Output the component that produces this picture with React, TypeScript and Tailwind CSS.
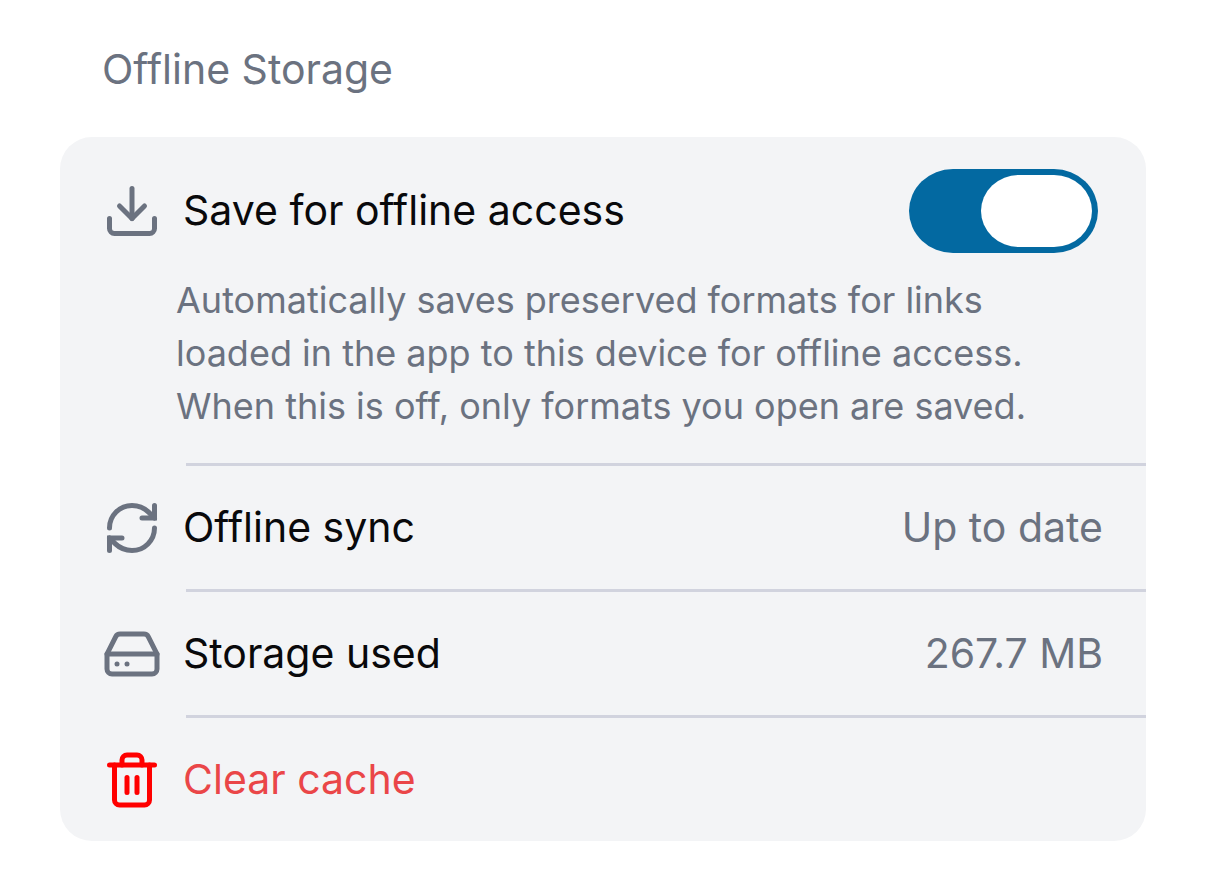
import { Download, HardDrive, RefreshCw, Trash2 } from "lucide-react";
import type { ReactNode } from "react";

function Row({ icon, children }: { icon: ReactNode; children: ReactNode }) {
  return (
    <div className="flex min-h-[123px] items-center gap-[21px] pr-[43px] pl-[42px]">
      <span className="shrink-0">{icon}</span>
      <div className="flex grow items-center justify-between pb-[2px]">{children}</div>
    </div>
  );
}

function Divider() {
  return <hr className="ml-[126px] border-t-3 border-[#d1d3de]" />;
}

export default function App() {
  return (
    <main className="px-[60px] pt-[42px] pb-[42px] font-['Inter',sans-serif] text-[41px] leading-[54px] text-[#6b7280]">
      <h2 className="pl-[42px]">Offline Storage</h2>
      <section className="mt-[41px] overflow-hidden rounded-[32px] bg-[#f3f4f6]">
        <div className="flex items-center gap-[21px] pt-8 pr-12 pb-[21px] pl-[42px]">
          <Download size={60} className="shrink-0" />
          <label htmlFor="offline" className="grow pb-[2px] text-[#09090b]">Save for offline access</label>
          <input
            id="offline"
            type="checkbox"
            role="switch"
            defaultChecked
            className="flex h-[84px] w-[189px] shrink-0 appearance-none rounded-[44px/42px] bg-[#9ca3af] p-[6px] before:h-[72px] before:w-[111px] before:rounded-[38px/36px] before:bg-white checked:justify-end checked:bg-[#0369a1]"
          />
        </div>
        <p className="mb-[30px] pr-[100px] pl-[116px] text-[36px] leading-[53px]">
          Automatically saves preserved formats for links loaded in the app to this device for offline access. When this is off, only formats you open are saved.
        </p>
        <Divider />
        <Row icon={<RefreshCw size={60} strokeLinejoin="miter" />}>
          <span className="text-[#09090b]">Offline sync</span>
          <span>Up to date</span>
        </Row>
        <Divider />
        <Row icon={<HardDrive size={60} />}>
          <span className="text-[#09090b]">Storage used</span>
          <span>267.7 MB</span>
        </Row>
        <Divider />
        <Row icon={<Trash2 size={60} color="#ff0000" />}>
          <button type="button" className="text-[#ea4648]">Clear cache</button>
        </Row>
      </section>
    </main>
  );
}
